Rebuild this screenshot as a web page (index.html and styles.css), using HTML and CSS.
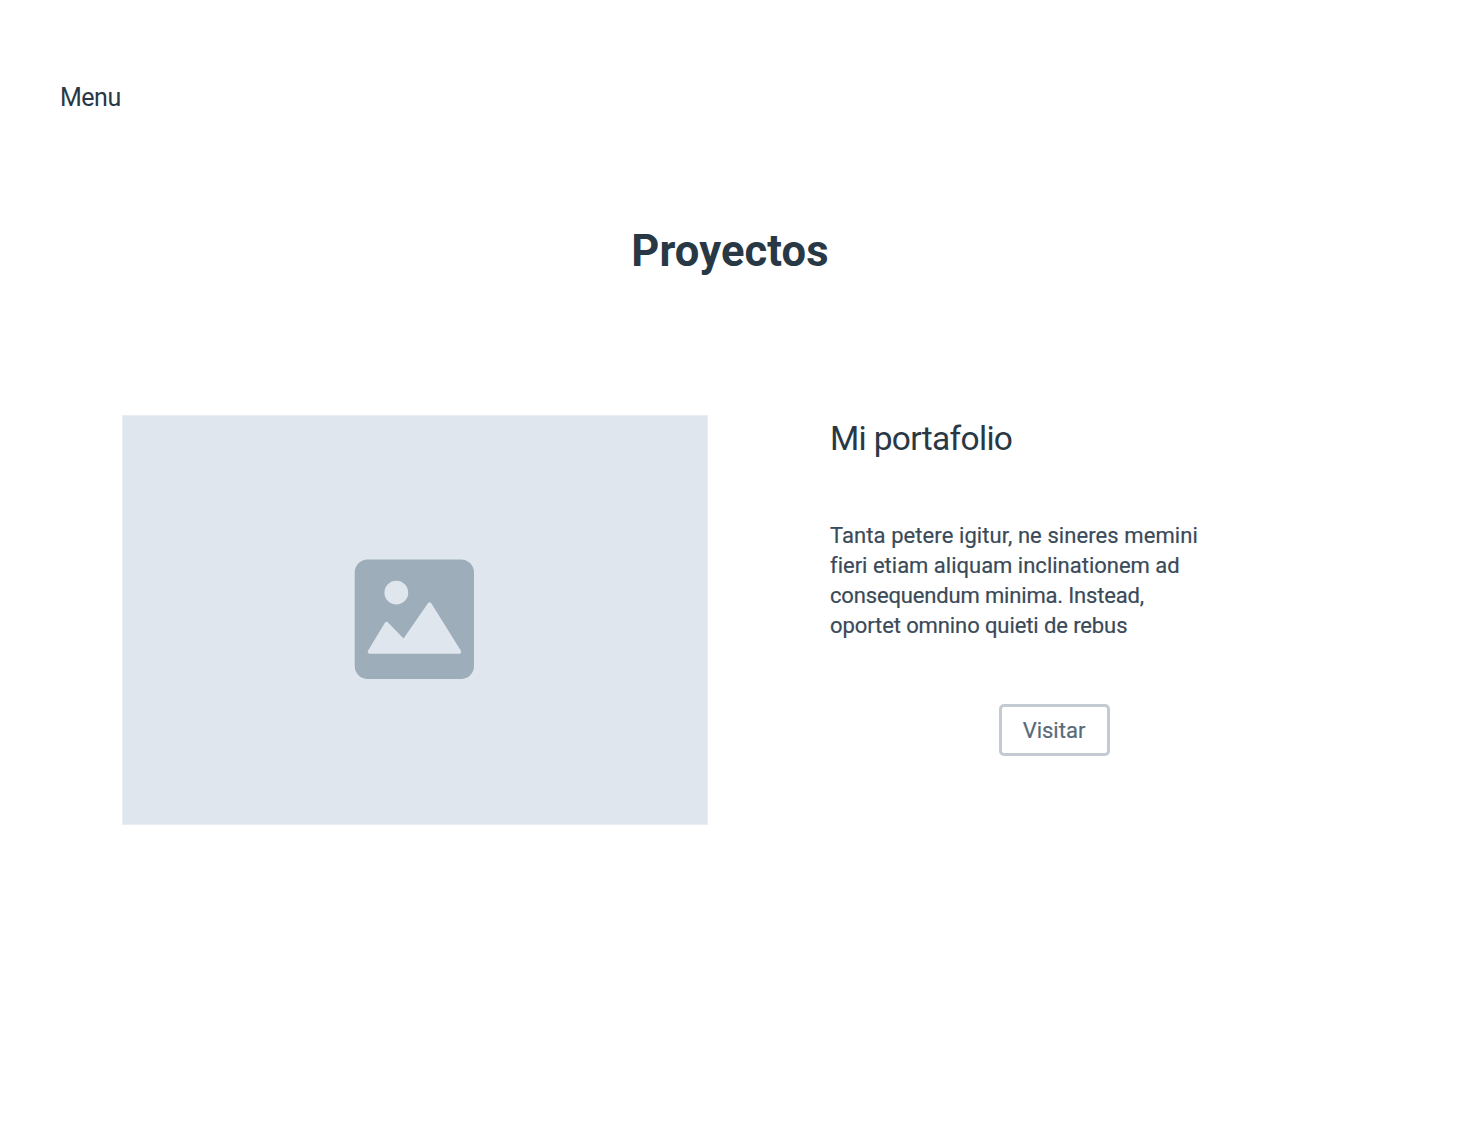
FILE: index.html
```html
<!DOCTYPE html>
<html lang="es">
<head>
<meta charset="utf-8">
<title>Proyectos</title>
<link rel="stylesheet" href="styles.css">
</head>
<body>
<nav class="menu">Menu</nav>
<h1 class="title">Proyectos</h1>
<main class="project">
  <div class="cover">
    <svg class="cover-icon" viewBox="-0.7 -0.5 120 120" aria-hidden="true">
      <rect width="119.300" height="119.500" rx="13" fill="#9dadb9"/>
      <circle cx="41.600" cy="33.200" r="11.900" fill="#dfe6ee"/>
      <path d="M15 92.200L31.900 64.300L49.100 82.200L74.900 44.800L104.500 92.200Z" fill="#dfe6ee" stroke="#dfe6ee" stroke-width="4" stroke-linejoin="round"/>
    </svg>
  </div>
  <section class="details">
    <h2 class="name">Mi portafolio</h2>
    <p class="description">
      <span class="line line-wide">Tanta petere igitur, ne sineres memini</span>
      <span class="line">fieri etiam aliquam inclinationem ad</span>
      <span class="line line-tight">consequendum minima. Instead,</span>
      <span class="line line-snug">oportet omnino quieti de rebus</span>
    </p>
    <button class="visit" type="button">Visitar</button>
  </section>
</main>
</body>
</html>
```
FILE: styles.css
```css
* { box-sizing: border-box; }
body {
  margin: 0;
  min-height: 1125px;
  background: #fff;
  color: #293845;
  font-family: Roboto, "Liberation Sans", sans-serif;
  font-variant-ligatures: none;
}
.menu {
  padding: 83px 60px 0;
  font-size: 25px;
  line-height: 30px;
  letter-spacing: -0.5px;
}
.title {
  margin: 112px 0 0;
  text-align: center;
  font-size: 43.5px;
  font-weight: 700;
  line-height: 54px;
  letter-spacing: 0.1px;
}
.project {
  display: flex;
  gap: 122px;
  padding: 136px 0 0 122px;
}
.cover {
  display: flex;
  align-items: center;
  justify-content: center;
  width: 586px;
  height: 410px;
  padding: 0 2px 2px 0;
  border: 1px solid #e9eef3;
  background: #dfe6ee;
}
.cover-icon { width: 120px; height: 120px; }
.details {
  display: flex;
  flex-direction: column;
  width: 449px;
}
.name {
  margin: 4px 0 0;
  font-size: 33.5px;
  font-weight: 400;
  line-height: 40px;
  letter-spacing: -0.68px;
}
.description {
  margin: 62px 0 0;
  color: #3a4a58;
  font-size: 22px;
  line-height: 30px;
  -webkit-text-stroke: 0.2px;
}
.line {
  display: block;
  white-space: nowrap;
}
.line-wide { letter-spacing: 0.08px; }
.line-tight { letter-spacing: -0.16px; }
.line-snug { letter-spacing: -0.1px; }
.visit {
  align-self: center;
  width: 111px;
  height: 52px;
  margin-top: 63px;
  padding: 2px 1px 0 0;
  border: 3px solid #c3cad2;
  border-radius: 5px;
  background: #fff;
  color: #586a79;
  font: 400 22px/30px Roboto, "Liberation Sans", sans-serif;
  -webkit-text-stroke: 0.2px;
}
```
